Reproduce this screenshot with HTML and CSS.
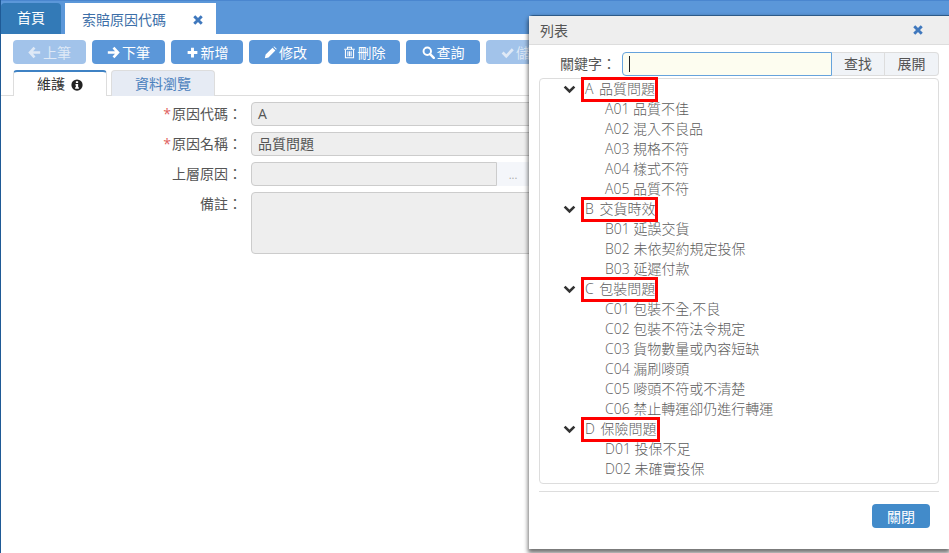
FILE: index.html
```html
<!DOCTYPE html>
<html lang="zh-Hant">
<head>
<meta charset="utf-8">
<title>索賠原因代碼</title>
<link rel="stylesheet" href="styles.css">
</head>
<body>
<svg class="defs" width="0" height="0">
  <symbol id="i-left" viewBox="0 0 16 16"><path d="M8 2 2.500 8 8 14M3 8h12" fill="none" stroke="currentColor" stroke-width="3.200"/></symbol>
  <symbol id="i-right" viewBox="0 0 16 16"><path d="M8 2l5.500 6L8 14M13 8H1" fill="none" stroke="currentColor" stroke-width="3.200"/></symbol>
  <symbol id="i-plus" viewBox="0 0 16 16"><path d="M8 2v12M2 8h12" fill="none" stroke="currentColor" stroke-width="3.600"/></symbol>
  <symbol id="i-pencil" viewBox="0 0 16 16"><path d="M1 15l1-4.500L10.500 2l3.500 3.500L5.500 14zM11.500 1l1-.5 3 3-.5 1z" fill="currentColor"/></symbol>
  <symbol id="i-trash" viewBox="0 0 16 16"><path d="M3 5v9.500h10V5M1.500 4h13M5.500 4V1.500h5V4M6 6.500v6M8 6.500v6M10 6.500v6" fill="none" stroke="currentColor" stroke-width="1.300"/></symbol>
  <symbol id="i-search" viewBox="0 0 16 16"><circle cx="6.500" cy="6.500" r="4.600" fill="none" stroke="currentColor" stroke-width="2.400"/><path d="M10 10l4.500 4.500" stroke="currentColor" stroke-width="3" stroke-linecap="round"/></symbol>
  <symbol id="i-check" viewBox="0 0 16 16"><path d="M2 8l4.500 4.500L14.500 4" fill="none" stroke="currentColor" stroke-width="3.400"/></symbol>
  <symbol id="i-info" viewBox="0 0 16 16"><circle cx="8" cy="8" r="7.500" fill="currentColor"/><path d="M6.500 3h3v2.300h-3zM6 6.500h3.500v4.500h1v2h-5v-2h1V8.500H6z" fill="#fff"/></symbol>
  <symbol id="i-x" viewBox="0 0 16 16"><path d="M3 3l10 10M13 3 3 13" fill="none" stroke="currentColor" stroke-width="3.800"/></symbol>
  <symbol id="i-chev" viewBox="0 0 16 16"><path d="M2 4.500l6 6 6-6" fill="none" stroke="currentColor" stroke-width="3.200"/></symbol>
</svg>

<div class="page">
  <header class="topbar">
    <a class="home-tab">首頁</a>
    <a class="doc-tab"><span>索賠原因代碼</span><svg class="doc-close"><use href="#i-x"/></svg></a>
  </header>

  <div class="toolbar">
    <button class="btn off w73"><svg><use href="#i-left"/></svg>上筆</button>
    <button class="btn w73"><svg><use href="#i-right"/></svg>下筆</button>
    <button class="btn w72"><svg><use href="#i-plus"/></svg>新增</button>
    <button class="btn w73"><svg><use href="#i-pencil"/></svg>修改</button>
    <button class="btn w72"><svg><use href="#i-trash"/></svg>刪除</button>
    <button class="btn w74"><svg><use href="#i-search"/></svg>查詢</button>
    <button class="btn off w73"><svg><use href="#i-check"/></svg>儲存</button>
  </div>

  <nav class="tabs">
    <a class="tab active">維護<svg class="info"><use href="#i-info"/></svg></a>
    <a class="tab">資料瀏覽</a>
  </nav>

  <form class="form">
    <div class="row"><label class="label"><i>*</i>原因代碼：</label><div class="field">A</div></div>
    <div class="row"><label class="label"><i>*</i>原因名稱：</label><div class="field">品質問題</div></div>
    <div class="row"><label class="label">上層原因：</label><div class="field picker"></div><div class="pick-btn">...</div></div>
    <div class="row"><label class="label">備註：</label><div class="field area"></div></div>
  </form>
</div>

<aside class="dialog">
  <div class="dlg-head"><span>列表</span><svg class="dlg-x"><use href="#i-x"/></svg></div>
  <div class="dlg-body">
    <div class="search">
      <label class="search-label">關鍵字：</label>
      <div class="search-input"><b class="caret"></b></div>
      <button class="light first">查找</button>
      <button class="light">展開</button>
    </div>
    <div class="tree">
      <div class="group"><svg class="chev"><use href="#i-chev"/></svg><span class="mark">A 品質問題</span></div>
      <div class="leaf">A01 品質不佳</div>
      <div class="leaf">A02 混入不良品</div>
      <div class="leaf">A03 規格不符</div>
      <div class="leaf">A04 樣式不符</div>
      <div class="leaf">A05 品質不符</div>
      <div class="group"><svg class="chev"><use href="#i-chev"/></svg><span class="mark">B 交貨時效</span></div>
      <div class="leaf">B01 延誤交貨</div>
      <div class="leaf">B02 未依契約規定投保</div>
      <div class="leaf">B03 延遲付款</div>
      <div class="group"><svg class="chev"><use href="#i-chev"/></svg><span class="mark">C 包裝問題</span></div>
      <div class="leaf">C01 包裝不全,不良</div>
      <div class="leaf">C02 包裝不符法令規定</div>
      <div class="leaf">C03 貨物數量或內容短缺</div>
      <div class="leaf">C04 漏刷嘜頭</div>
      <div class="leaf">C05 嘜頭不符或不清楚</div>
      <div class="leaf">C06 禁止轉運卻仍進行轉運</div>
      <div class="group"><svg class="chev"><use href="#i-chev"/></svg><span class="mark">D 保險問題</span></div>
      <div class="leaf">D01 投保不足</div>
      <div class="leaf">D02 未確實投保</div>
    </div>
    <div class="dlg-foot"><button class="close">關閉</button></div>
  </div>
</aside>
</body>
</html>
```

FILE: styles.css
```css
* { box-sizing: border-box; }
html, body { margin: 0; height: 100%; overflow: hidden; }
body {
  position: relative;
  background: #fff;
  color: #555;
  font-family: "Open Sans", "Noto Sans CJK TC", sans-serif;
  font-size: 14px;
}
.defs { position: absolute; }
button { font: inherit; padding: 0; }

.page { height: 553px; border-left: 1px solid #1f5a96; overflow: hidden; }

.topbar {
  display: flex;
  height: 34px;
  padding-top: 2px;
  background: #5b97d9;
  border-top: 1px solid #4a86cf;
}
.home-tab {
  width: 60px;
  margin-right: 4px;
  background: #337ab7;
  border-radius: 4px 4px 0 0;
  color: #fff;
  text-align: center;
  line-height: 30px;
}
.doc-tab {
  display: flex;
  align-items: center;
  width: 151px;
  padding-left: 17px;
  background: #fff;
  color: #3d6fa8;
}
.doc-close { width: 12px; height: 12px; margin: 2px 0 0 26px; color: #3f78bd; }

.toolbar { display: flex; gap: 6px; margin: 6px 0 0 12px; }
.btn {
  display: flex;
  align-items: center;
  justify-content: center;
  gap: 2px;
  flex: none;
  height: 24px;
  border: 0;
  border-radius: 4px;
  background: #5b97d9;
  color: #fff;
}
.btn svg { width: 13px; height: 13px; }
.btn.off { background: #a2c3ea; color: #dfe9f6; }
.w72 { width: 72px; }
.w73 { width: 73px; }
.w74 { width: 74px; }

.tabs {
  display: flex;
  gap: 4px;
  height: 26px;
  margin-top: 6px;
  padding-left: 12px;
  border-bottom: 1px solid #ddd;
}
.tab {
  width: 104px;
  height: 26px;
  background: #e6ebf4;
  border: 1px solid #ddd;
  border-bottom: 0;
  border-radius: 4px 4px 0 0;
  color: #4a80bd;
  text-align: center;
  line-height: 25px;
}
.tab.active {
  width: 94px;
  background: #fff;
  border-top: 2px solid #3f82c4;
  color: #333;
  line-height: 24px;
}
.info { width: 12px; height: 12px; margin-left: 6px; vertical-align: -2px; color: #222; }

.form { display: flex; flex-direction: column; gap: 6px; margin-top: 6px; }
.row { display: flex; width: 700px; }
.label {
  width: 241px;
  padding-top: 2px;
  color: #555;
  text-align: right;
  line-height: 20px;
}
.label i { margin-right: 1px; color: #e0605e; font-style: normal; }
.field {
  flex: none;
  width: 450px;
  height: 24px;
  margin-left: 9px;
  padding-left: 6px;
  background: #eee;
  border: 1px solid #ccc;
  border-radius: 4px;
  line-height: 22px;
  color: #555;
}
.field.picker { width: 246px; border-radius: 4px 0 0 4px; }
.pick-btn {
  flex: none;
  width: 32px;
  height: 24px;
  background: #f4f6fa;
  color: #aaa;
  font-size: 11px;
  text-align: center;
  line-height: 26px;
}
.field.area { height: 62px; }

.dialog {
  position: absolute;
  left: 529px;
  top: 15px;
  width: 420px;
  height: 534px;
  background: #fff;
  border-radius: 4px 0 0 0;
  border-top: 1px solid #2d5a88;
  box-shadow: 0 3px 4px 1px rgba(0,0,0,.55);
}
.dlg-head {
  display: flex;
  align-items: center;
  justify-content: space-between;
  height: 29px;
  padding: 0 25px 0 11px;
  background: #eee;
  border-bottom: 1px solid #ddd;
  color: #555;
}
.dlg-x { width: 12px; height: 12px; color: #3f78bd; }
.dlg-body { padding: 7px 10px 0; }

.search { display: flex; align-items: center; height: 24px; }
.search-label { width: 77px; padding-bottom: 2px; text-align: right; }
.search-input {
  width: 210px;
  height: 24px;
  margin-left: 6px;
  padding: 3px 0 0 6px;
  background: #fdfdf0;
  border: 1px solid #66a3dc;
  border-radius: 4px 0 0 4px;
}
.caret { display: block; width: 1px; height: 16px; background: #222; }
.light {
  width: 54px;
  height: 24px;
  padding-bottom: 2px;
  background: #f0f3f7;
  border: 1px solid #ddd;
  border-left: 0;
  color: #555;
}
.light.first { width: 53px; }
.light:last-child { border-radius: 0 4px 4px 0; }

.tree {
  height: 406px;
  margin-top: 2px;
  border: 1px solid #ddd;
  border-radius: 4px;
  font-weight: 300;
  color: #5c5c5c;
}
.group { display: flex; align-items: center; height: 20px; padding-left: 23px; }
.chev { width: 13px; height: 13px; margin-right: 8px; color: #333; }
.mark {
  padding: 0 0 1px 1px;
  line-height: 18px;
  outline: 3px solid #f00;
  word-spacing: 2px;
  white-space: nowrap;
}
.leaf { height: 20px; padding-left: 65px; line-height: 20px; white-space: nowrap; }

.dlg-foot { margin-top: 7px; padding: 12px 9px 0 0; border-top: 1px solid #ddd; text-align: right; }
.close {
  width: 58px;
  height: 24px;
  background: #428bca;
  border: 0;
  border-radius: 4px;
  color: #fff;
}
```
